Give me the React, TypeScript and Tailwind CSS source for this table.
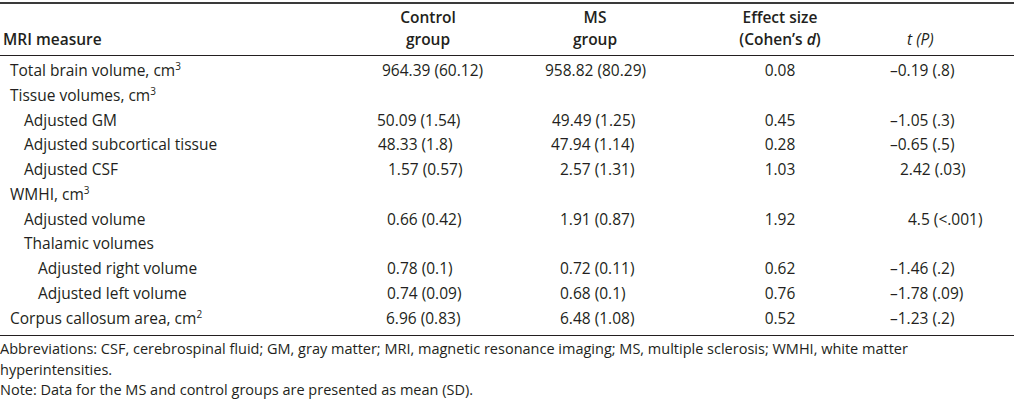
import React from "react";

type Row = {
  label: React.ReactNode;
  indent: number;
  control?: string;
  controlPad?: number;
  ms?: string;
  msPad?: number;
  effect?: string;
  t?: string;
  tPad?: number;
};

const Cm = ({ n }: { n: string }) => (
  <>
    cm<sup className="text-[10px] -top-[0.6em]">{n}</sup>
  </>
);

const rows: Row[] = [
  { label: <>Total brain volume, <Cm n="3" /></>, indent: 0, control: "964.39 (60.12)", controlPad: 42, ms: "958.82 (80.29)", msPad: 29, effect: "0.08", t: "–0.19 (.8)", tPad: 4 },
  { label: <>Tissue volumes, <Cm n="3" /></>, indent: 0 },
  { label: "Adjusted GM", indent: 1, control: "50.09 (1.54)", controlPad: 37, ms: "49.49 (1.25)", msPad: 36, effect: "0.45", t: "–1.05 (.3)", tPad: 4 },
  { label: "Adjusted subcortical tissue", indent: 1, control: "48.33 (1.8)", controlPad: 38, ms: "47.94 (1.14)", msPad: 35, effect: "0.28", t: "–0.65 (.5)", tPad: 4 },
  { label: "Adjusted CSF", indent: 1, control: "1.57 (0.57)", controlPad: 48, ms: "2.57 (1.31)", msPad: 44, effect: "1.03", t: "2.42 (.03)", tPad: 14 },
  { label: <>WMHI, <Cm n="3" /></>, indent: 0 },
  { label: "Adjusted volume", indent: 1, control: "0.66 (0.42)", controlPad: 47, ms: "1.91 (0.87)", msPad: 44, effect: "1.92", t: "4.5 (<.001)", tPad: 22 },
  { label: "Thalamic volumes", indent: 1 },
  { label: "Adjusted right volume", indent: 2, control: "0.78 (0.1)", controlPad: 47, ms: "0.72 (0.11)", msPad: 44, effect: "0.62", t: "–1.46 (.2)", tPad: 4 },
  { label: "Adjusted left volume", indent: 2, control: "0.74 (0.09)", controlPad: 47, ms: "0.68 (0.1)", msPad: 44, effect: "0.76", t: "–1.78 (.09)", tPad: 4 },
  { label: <>Corpus callosum area, <Cm n="2" /></>, indent: 0, control: "6.96 (0.83)", controlPad: 46, ms: "6.48 (1.08)", msPad: 44, effect: "0.52", t: "–1.23 (.2)", tPad: 4 },
];

const cols = "grid grid-cols-[340px_176px_158px_212px_128px]";
const indentPad = ["pl-[10px]", "pl-[24px]", "pl-[38px]"];

export default function App() {
  return (
    <div
      className="w-[1014px] h-[403px] overflow-hidden bg-white text-[#231f20] text-[15.5px]"
      style={{ fontFamily: '"Open Sans", "Noto Sans", sans-serif' }}
    >
      <div className="mt-[2px] h-[2px] bg-[#3a3a3a]" />

      {/* header */}
      <div className={`${cols} pt-[2px] pb-[5px] border-b border-[#231f20] font-semibold leading-[22px]`}>
        <div className="self-end pl-[3px]">MRI measure</div>
        <div className="text-center">
          Control
          <br />
          group
        </div>
        <div className="text-center">
          MS
          <br />
          group
        </div>
        <div className="text-center">
          Effect size
          <br />
          (Cohen’s <i>d</i>)
        </div>
        <div className="self-end pl-[21px] font-normal italic">t (P)</div>
      </div>

      {/* body */}
      <div className="pt-[2px] pb-[5px] border-b border-[#231f20]">
        {rows.map((r, i) => (
          <div key={i} className={`${cols} h-[24.75px] leading-[24.75px] whitespace-nowrap`}>
            <div className={indentPad[r.indent]}>{r.label}</div>
            <div style={{ paddingLeft: r.controlPad }}>{r.control}</div>
            <div style={{ paddingLeft: r.msPad }}>{r.ms}</div>
            <div className="text-center">{r.effect}</div>
            <div style={{ paddingLeft: r.tPad }}>{r.t}</div>
          </div>
        ))}
      </div>

      {/* notes */}
      <div className="pt-[3px] leading-[20.5px] text-[14.5px]">
        <p>
          Abbreviations: CSF, cerebrospinal fluid; GM, gray matter; MRI, magnetic resonance imaging; MS, multiple
          sclerosis; WMHI, white matter
          <br />
          hyperintensities.
        </p>
        <p>Note: Data for the MS and control groups are presented as mean (SD).</p>
      </div>
    </div>
  );
}
